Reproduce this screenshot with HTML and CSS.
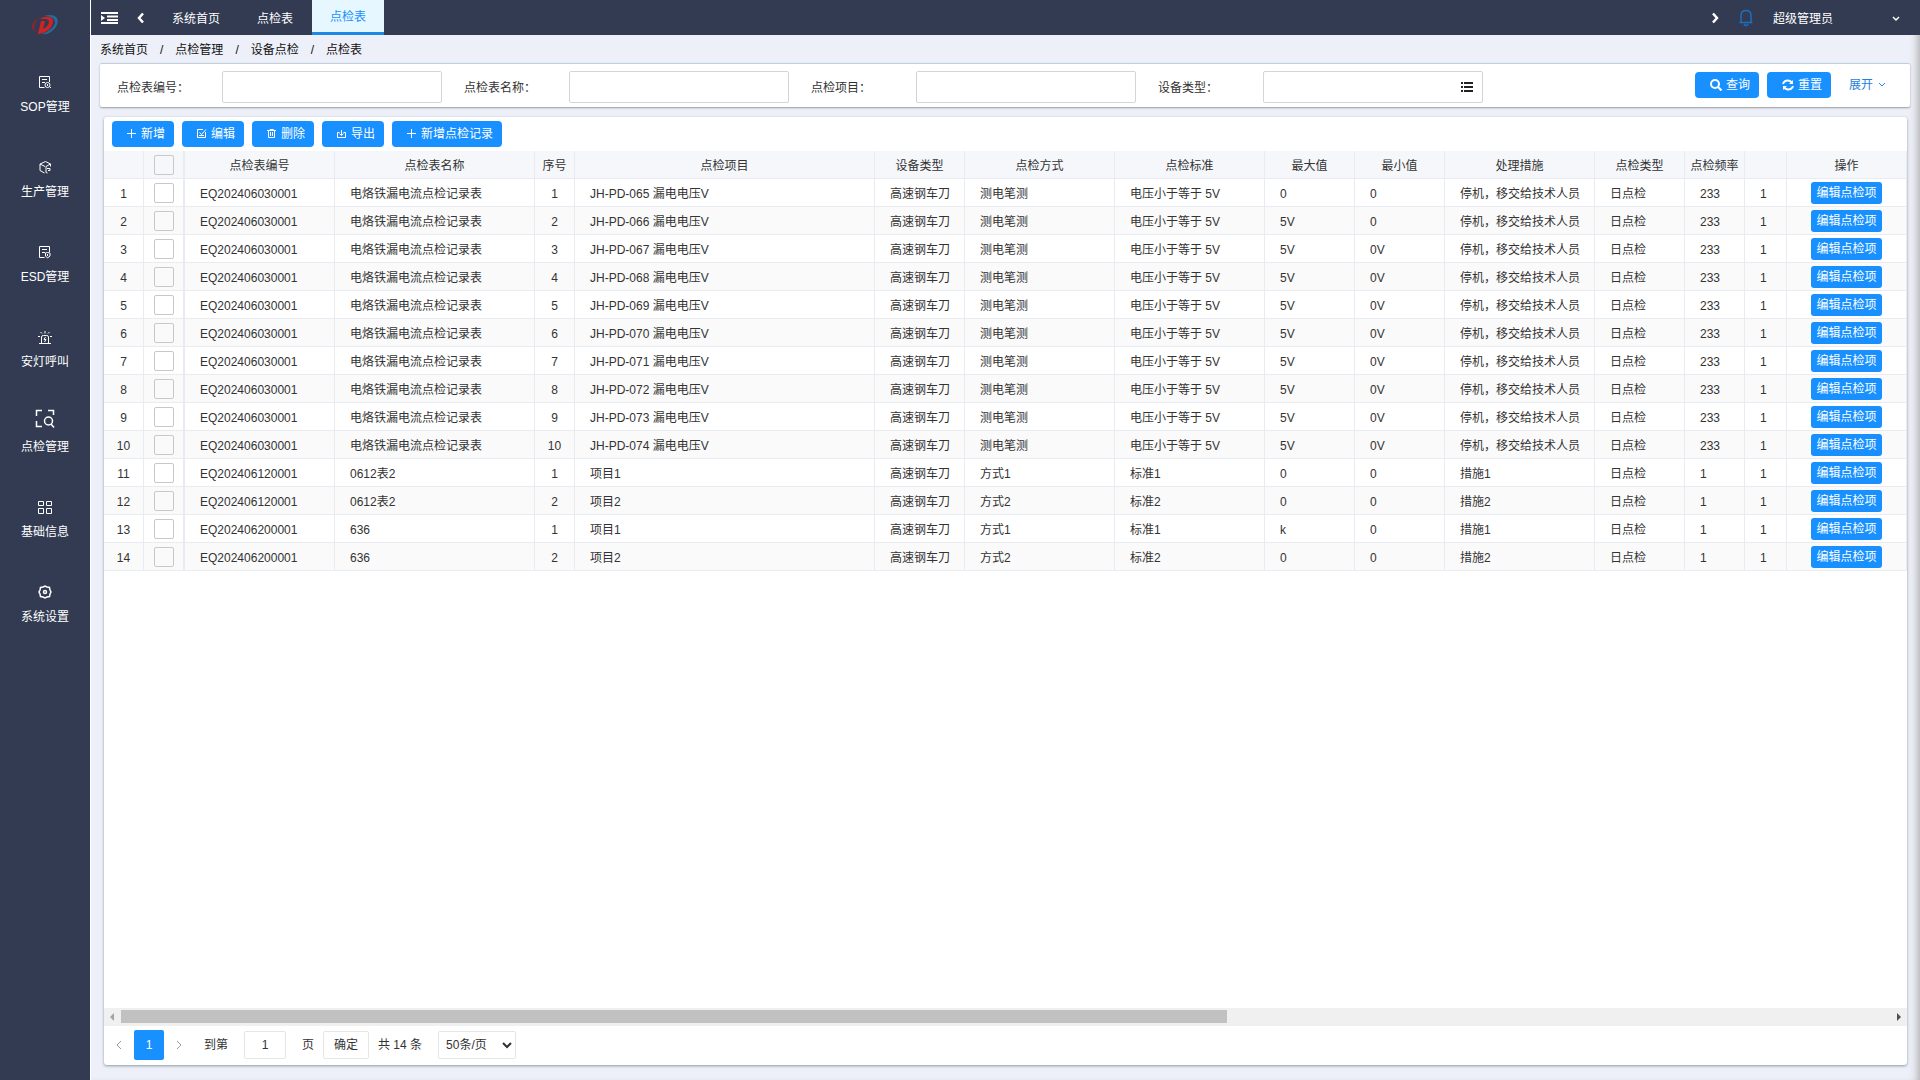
FILE: index.html
```html
<!DOCTYPE html>
<html lang="zh-CN">
<head>
    <meta charset="UTF-8">
    <meta name="viewport" content="width=device-width, initial-scale=1.0">
    <title>点检表</title>
    <link rel="stylesheet" href="styles.css">
</head>
<body>
    <nav class="sidebar">
        <a class="logo" href="#" aria-label="首页">
            <svg width="28" height="22" viewBox="0 0 28 22">
                <path d="M11 3Q3 5 1 11Q0 16 5 18Q2 14 4 9Q6 5 11 3Z" fill="#8d2430"/>
                <path d="M13 2Q22-1 26 4Q29 11 20 18Q15 21 11 20Q22 16 24 9Q24 2 13 2Z" fill="#2a6a99"/>
                <path d="M10 7H14L12 15Q17 13 18 8Q18 5 14 5H9Q13 2 18 3Q23 4 22 9Q20 18 7 20Z" fill="#cf2424"/>
            </svg>
        </a>
        <a class="menu-item" href="#">
            <svg class="menu-icon" viewBox="0 0 14 14"><path d="M6.500 12.500H1.500V1.500H11.500V7M4 4.500H9M4 7.500H7"/><circle cx="9.500" cy="10" r="2.500"/><path d="M9.500 9V11M12 12.500h1"/></svg>
            <span>SOP管理</span>
        </a>
        <a class="menu-item" href="#">
            <svg class="menu-icon" viewBox="0 0 14 14"><path d="M6.500 13L2 10.500V4L7.500 1.500L12.500 4L8 6.500V12.500L9.500 13M2 4L7 6.500M12.500 4V6.500M9 8.500H12V10.500H10"/></svg>
            <span>生产管理</span>
        </a>
        <a class="menu-item" href="#">
            <svg class="menu-icon" viewBox="0 0 14 14"><path d="M6.500 12.500H1.500V1.500H11.500V7M4 4.500H9M4 7.500H7M7.500 8L9.500 7.500L12 8V11L9.500 13L7.500 11ZM9.500 9V11"/></svg>
            <span>ESD管理</span>
        </a>
        <a class="menu-item" href="#">
            <svg class="menu-icon" viewBox="0 0 14 14"><path d="M1 13.500H13M3.500 13V7Q3.500 5.500 5.500 5.500H8.500Q10.500 5.500 10.500 7V13M7 1V3.500M2.500 2L4 3.500M11.500 2L10 3.500M0 6.500H2M12 6.500H14M7.500 7L6 9.500H8L6.500 12"/></svg>
            <span>安灯呼叫</span>
        </a>
        <a class="menu-item" href="#">
            <svg class="menu-icon menu-icon-big" viewBox="0 0 20 20"><path d="M1.500 7V1.500H7M13 1.500H18.500V6M1.500 12V17.500H7"/><circle cx="13.500" cy="12" r="4"/><path d="M16 15L19 18.500"/></svg>
            <span>点检管理</span>
        </a>
        <a class="menu-item" href="#">
            <svg class="menu-icon" viewBox="0 0 14 14"><path d="M.500 1.500H5.500V5.500H.500ZM8.500 1.500H13.500V5.500H8.500ZM.500 8.500H5.500V13.500H.500ZM8.500 8.500H13.500V13.500H8.500Z"/></svg>
            <span>基础信息</span>
        </a>
        <a class="menu-item" href="#">
            <svg class="menu-icon menu-icon-bold" viewBox="0 0 14 14"><path d="M5 2L7 1L9 2L11.500 2.500L12 5L13 7L12 9L11.500 11.500L9 12L7 13L5 12L2.500 11.500L2 9L1 7L2 5L2.500 2.500Z"/><circle cx="7" cy="7" r="1.500"/></svg>
            <span>系统设置</span>
        </a>
    </nav>

    <div class="main">
        <header class="topbar">
            <button class="icon-btn fold-btn" aria-label="收起菜单">
                <svg width="18" height="14" viewBox="0 0 18 14" fill="#fff"><path d="M0 1H17V3H0ZM6 4.500H17V6.500H6ZM6 8H17V10H6ZM0 11H17V13H0ZM0 4L4 7L0 10Z"/></svg>
            </button>
            <button class="icon-btn prev-btn" aria-label="上一个">
                <svg width="8" height="12" viewBox="0 0 8 12" fill="none" stroke="#fff" stroke-width="2.500"><path d="M6 1.500L2 6L6 10.500"/></svg>
            </button>
            <div class="tabs">
                <a class="tab" href="#">系统首页</a>
                <a class="tab" href="#">点检表</a>
                <a class="tab active" href="#">点检表</a>
            </div>
            <button class="icon-btn next-btn" aria-label="下一个">
                <svg width="8" height="12" viewBox="0 0 8 12" fill="none" stroke="#fff" stroke-width="2.500"><path d="M2 1.500L6 6L2 10.500"/></svg>
            </button>
            <button class="icon-btn bell-btn" aria-label="消息">
                <svg width="14" height="18" viewBox="0 0 14 18" fill="none" stroke="#1c6fbf" stroke-width="1.500"><path d="M.500 13.500H13.500M2 13V6.500Q2 1.500 7 1.500Q12 1.500 12 6.500V13M5 15Q7 18 9 15"/></svg>
            </button>
            <button class="user">
                <span>超级管理员</span>
                <svg width="8" height="6" viewBox="0 0 8 6" fill="none" stroke="#fff" stroke-width="1.500"><path d="M1 1L4 4L7 1"/></svg>
            </button>
        </header>

        <div class="breadcrumb">
            <a href="#">系统首页</a><span>/</span><a href="#">点检管理</a><span>/</span><a href="#">设备点检</a><span>/</span><a href="#">点检表</a>
        </div>

        <form class="search">
            <div class="field"><label for="code">点检表编号：</label><input type="text" id="code"></div>
            <div class="field"><label for="name">点检表名称：</label><input type="text" id="name"></div>
            <div class="field"><label for="item">点检项目：</label><input type="text" id="item"></div>
            <div class="field">
                <label for="type">设备类型：</label><input type="text" id="type">
                <svg class="list-icon" width="14" height="12" viewBox="0 0 14 12" fill="#222"><path d="M1 1H3V3H1ZM4 1H13V3H4ZM1 5H3V7H1ZM4 5H13V7H4ZM1 9H3V11H1ZM4 9H13V11H4Z"/></svg>
            </div>
            <div class="search-btns">
                <button type="button" class="btn">
                    <svg width="12" height="12" viewBox="0 0 12 12" fill="none" stroke="#fff" stroke-width="2"><circle cx="5" cy="5" r="4"/><path d="M8 8L11.500 11.500"/></svg>查询
                </button>
                <button type="button" class="btn">
                    <svg width="12" height="12" viewBox="0 0 12 12" fill="none" stroke="#fff" stroke-width="2"><path d="M1 5Q2 1.500 6 1.500Q8 1.500 10 3.500M11 7Q10 10.500 6 10.500Q4 10.500 2 8.500"/><path d="M11 1V5H7ZM1 11V7H5Z" fill="#fff" stroke="none"/></svg>重置
                </button>
                <a class="expand" href="#">展开
                    <svg width="8" height="6" viewBox="0 0 8 6" fill="none" stroke="#1890ff"><path d="M1 1L4 4L7 1"/></svg>
                </a>
            </div>
        </form>

        <section class="panel">
            <div class="toolbar">
                <button class="btn"><svg width="10" height="10" viewBox="0 0 10 10" fill="none" stroke="#fff"><path d="M4.500 0V9M0 4.500H9"/></svg>新增</button>
                <button class="btn"><svg width="10" height="10" viewBox="0 0 10 10" fill="none" stroke="#fff"><path d="M6 .500H.500V8.500H8.500V3M2.500 3.500L4.500 5.500L9 .500M2 6.500H7"/></svg>编辑</button>
                <button class="btn"><svg width="10" height="10" viewBox="0 0 10 10" fill="none" stroke="#fff"><path d="M0 1.500H9M3 1.500V.500H6.500V1.500M1.500 1.500V8.500H7.500V1.500M3.500 3V7M5.500 3V7"/></svg>删除</button>
                <button class="btn"><svg width="10" height="10" viewBox="0 0 10 10" fill="none" stroke="#fff"><path d="M2.500 3.500H.500V8.500H8.500V3.500H6.500M4.500 1V6M2.500 4.500L4.500 6.500L6.500 4.500"/></svg>导出</button>
                <button class="btn"><svg width="10" height="10" viewBox="0 0 10 10" fill="none" stroke="#fff"><path d="M4.500 0V9M0 4.500H9"/></svg>新增点检记录</button>
            </div>

            <div class="table-wrap">
                <table class="grid">
                    <colgroup>
                        <col class="w40"><col class="w41"><col class="w150"><col class="w200"><col class="w40"><col class="w300">
                        <col class="w90"><col class="w150"><col class="w150"><col class="w90"><col class="w90"><col class="w150">
                        <col class="w90"><col class="w60"><col><col class="w120">
                    </colgroup>
                    <thead>
                        <tr>
                            <th></th>
                            <th class="check"><input type="checkbox" aria-label="全选"></th>
                            <th>点检表编号</th><th>点检表名称</th><th class="tight">序号</th><th>点检项目</th><th>设备类型</th><th>点检方式</th>
                            <th>点检标准</th><th>最大值</th><th>最小值</th><th>处理措施</th><th>点检类型</th><th class="tight">点检频率</th><th></th><th>操作</th>
                        </tr>
                    </thead>
                    <tbody id="rows"></tbody>
                </table>
            </div>

            <div class="scrollbar">
                <span class="arrow arrow-left"></span>
                <div class="track"><div class="thumb"></div></div>
                <span class="arrow arrow-right"></span>
            </div>

            <div class="pager">
                <button class="page-arrow" aria-label="上一页"><svg width="6" height="10" viewBox="0 0 6 10" fill="none" stroke="#999"><path d="M5 1L1 5L5 9"/></svg></button>
                <button class="page-now">1</button>
                <button class="page-arrow" aria-label="下一页"><svg width="6" height="10" viewBox="0 0 6 10" fill="none" stroke="#999"><path d="M1 1L5 5L1 9"/></svg></button>
                <label class="goto" for="page">到第</label>
                <input type="text" id="page" value="1">
                <span class="unit">页</span>
                <button class="ok">确定</button>
                <span class="total">共 14 条</span>
                <select aria-label="每页条数"><option>50条/页</option></select>
            </div>
        </section>
    </div>

    <script src="script.js"></script>
</body>
</html>
```
FILE: styles.css
```css
* {
    box-sizing: border-box;
}

body {
    margin: 0;
    display: flex;
    min-height: 100vh;
    background: #fff;
    color: #333;
    font-family: "Liberation Sans", Arial, "Noto Sans CJK SC", sans-serif;
    font-size: 12px;
    line-height: 18px;
}

a {
    color: inherit;
    text-decoration: none;
}

button,
input,
select {
    font: inherit;
    color: inherit;
}

button {
    border: 0;
    padding: 0;
    background: none;
    cursor: pointer;
}

/* sidebar */
.sidebar {
    flex: none;
    width: 90px;
    background: #323b52;
    color: #fff;
}

.logo {
    display: flex;
    justify-content: center;
    padding-top: 14px;
    height: 60px;
}

.menu-item {
    display: flex;
    flex-direction: column;
    align-items: center;
    justify-content: flex-end;
    gap: 9px;
    height: 85px;
    padding-bottom: 29px;
}

.menu-icon {
    width: 14px;
    height: 14px;
    fill: none;
    stroke: #fff;
}

.menu-icon-big {
    width: 20px;
    height: 20px;
    stroke-width: 1.5;
}

.menu-icon-bold {
    stroke-width: 1.5;
}

/* right side */
.main {
    flex: 1;
    min-width: 0;
    display: flex;
    flex-direction: column;
    margin-left: 1px;
    background: #edf0f8;
    box-shadow: inset -8px 0 8px -6px #aaa;
}

.topbar {
    display: flex;
    align-items: center;
    height: 35px;
    padding: 0 20px 0 10px;
    background: #323b52;
    color: #fff;
}

.icon-btn {
    display: flex;
}

.fold-btn {
    margin-right: 18px;
}

.tabs {
    flex: 1;
    display: flex;
    gap: 1px;
    margin-left: 9px;
}

.tab {
    padding: 0 18px;
    height: 35px;
    line-height: 38px;
}

.tab.active {
    background: #e6f7ff;
    color: #1890ff;
    border-bottom: 3px solid #1e88e5;
    line-height: 34px;
}

.bell-btn {
    margin: 0 20px;
}

.user {
    display: flex;
    align-items: center;
    justify-content: space-between;
    width: 127px;
    padding-top: 2px;
}

.breadcrumb {
    display: flex;
    gap: 12px;
    padding: 6px 9px 4px;
    color: #111;
}

.search {
    display: flex;
    align-items: center;
    margin: 0 10px 0 9px;
    padding: 0 24px 0 17px;
    height: 44px;
    background: #fff;
    border-top: 1px solid #c0cfde;
    border-radius: 2px;
    box-shadow: 0 1px 2px #999;
}

.field {
    position: relative;
    display: flex;
    align-items: center;
    margin-right: 22px;
    padding-top: 2px;
}

.field label {
    width: 105px;
    padding-top: 2px;
}

.field input {
    width: 220px;
    height: 32px;
    border: 1px solid #d5d5d5;
    border-radius: 2px;
    padding: 0 8px;
}

.list-icon {
    position: absolute;
    right: 9px;
    top: 12px;
}

.search-btns {
    display: flex;
    align-items: center;
    gap: 8px;
    margin-left: auto;
    padding-bottom: 2px;
}

.btn {
    display: flex;
    align-items: center;
    gap: 4px;
    height: 26px;
    padding: 0 9px 0 15px;
    border-radius: 4px;
    background: #1890ff;
    color: #fff;
    white-space: nowrap;
}

.expand {
    display: flex;
    align-items: center;
    gap: 5px;
    margin-left: 10px;
    color: #1e80e0;
}

/* table */
.panel {
    flex: 1;
    display: flex;
    flex-direction: column;
    margin: 10px 13px 15px;
    background: #fff;
    border-radius: 3px;
    box-shadow: 0 1px 3px #8a98a5;
}

.toolbar {
    display: flex;
    gap: 8px;
    padding: 4px 8px;
}

.table-wrap {
    flex: 1;
    overflow: hidden;
}

.grid {
    width: 100%;
    table-layout: fixed;
    border-collapse: separate;
    border-spacing: 0;
}

.w40 { width: 40px; }
.w41 { width: 41px; }
.w60 { width: 60px; }
.w90 { width: 90px; }
.w120 { width: 120px; }
.w150 { width: 150px; }
.w200 { width: 200px; }
.w300 { width: 300px; }

.grid th,
.grid td {
    height: 28px;
    padding: 2px 15px 0;
    border-right: 1px solid #e9ebf2;
    border-bottom: 1px solid #e9ebf2;
    font-weight: normal;
    text-align: left;
    white-space: nowrap;
    overflow: hidden;
}

.grid th {
    background: #f5f7fb;
    text-align: center;
}

.grid tbody tr:nth-child(even) {
    background: #fafafa;
}

.grid .num,
.grid .tight {
    padding: 2px 0 0;
    text-align: center;
}

.grid .check,
.grid .op {
    padding: 1px 0 0;
    text-align: center;
}

.grid .check {
    border-right-width: 2px;
}

.check input {
    appearance: none;
    display: block;
    width: 20px;
    height: 20px;
    margin: 0 auto;
    border: 1px solid #c8c8c8;
    border-radius: 2px;
}

.edit {
    display: block;
    margin: 0 auto;
    height: 22px;
    padding: 0 5px;
    border-radius: 3px;
    background: #1890ff;
    color: #fff;
}

/* horizontal scrollbar */
.scrollbar {
    display: flex;
    align-items: center;
    height: 18px;
    padding-bottom: 1px;
    background: #f0f0f0;
}

.track {
    flex: 1;
}

.thumb {
    width: 62.5%;
    height: 13px;
    background: #c1c1c1;
}

.arrow {
    margin: 0 6px;
    border: 4px solid transparent;
}

.arrow-left {
    border-left: 0;
    border-right-color: #a3a3a3;
    margin-right: 7px;
}

.arrow-right {
    border-right: 0;
    border-left-color: #505050;
}

/* pager */
.pager {
    display: flex;
    align-items: center;
    height: 39px;
    padding-bottom: 1px;
}

.page-arrow {
    display: flex;
    justify-content: center;
    width: 30px;
}

.page-now {
    width: 30px;
    height: 30px;
    border-radius: 2px;
    background: #1890ff;
    color: #fff;
}

.goto {
    margin: 0 16px 0 10px;
}

.pager input,
.ok,
.pager select {
    height: 28px;
    border: 1px solid #e6e6e6;
    border-radius: 2px;
    background: #fff;
}

.pager input {
    width: 42px;
    text-align: center;
}

.unit {
    margin: 0 9px 0 16px;
}

.ok {
    width: 46px;
}

.total {
    margin: 0 16px 0 9px;
}

.pager select {
    width: 78px;
    padding: 0 3px;
}
```
FILE: script.js
```js
var rows = [];

for (var i = 1; i <= 10; i++) {
    rows.push(["EQ202406030001", "电烙铁漏电流点检记录表", i, "JH-PD-0" + (64 + i) + " 漏电电压V", "高速钢车刀", "测电笔测",
        "电压小于等于 5V", i == 1 ? "0" : "5V", i <= 2 ? "0" : "0V", "停机，移交给技术人员", "日点检", "233", "1"]);
}
rows.push(["EQ202406120001", "0612表2", 1, "项目1", "高速钢车刀", "方式1", "标准1", "0", "0", "措施1", "日点检", "1", "1"]);
rows.push(["EQ202406120001", "0612表2", 2, "项目2", "高速钢车刀", "方式2", "标准2", "0", "0", "措施2", "日点检", "1", "1"]);
rows.push(["EQ202406200001", "636", 1, "项目1", "高速钢车刀", "方式1", "标准1", "k", "0", "措施1", "日点检", "1", "1"]);
rows.push(["EQ202406200001", "636", 2, "项目2", "高速钢车刀", "方式2", "标准2", "0", "0", "措施2", "日点检", "1", "1"]);

var html = "";
rows.forEach(function (row, n) {
    html += '<tr><td class="num">' + (n + 1) + '</td>';
    html += '<td class="check"><input type="checkbox" aria-label="选择第' + (n + 1) + '行"></td>';
    row.forEach(function (text, c) {
        html += (c == 2 ? '<td class="num">' : "<td>") + text + "</td>";
    });
    html += '<td class="op"><button class="edit">编辑点检项</button></td></tr>';
});
document.querySelector("#rows").innerHTML = html;
```
